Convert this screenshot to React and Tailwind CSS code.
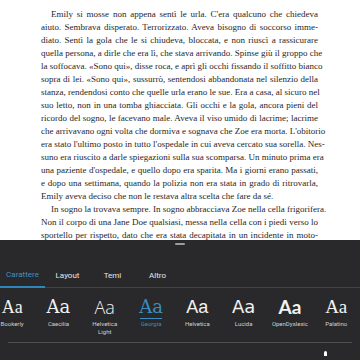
import React from "react";

const lines = [
  { t: "Emily si mosse non appena sentì le urla. C'era qualcuno che chiedeva", indent: true },
  { t: "aiuto. Sembrava disperato. Terrorizzato. Aveva bisogno di soccorso imme-" },
  { t: "diato. Sentì la gola che le si chiudeva, bloccata, e non riuscì a rassicurare" },
  { t: "quella persona, a dirle che era lì, che stava arrivando. Spinse giù il groppo che" },
  { t: "la soffocava. «Sono qui», disse roca, e aprì gli occhi fissando il soffitto bianco" },
  { t: "sopra di lei. «Sono qui», sussurrò, sentendosi abbandonata nel silenzio della" },
  { t: "stanza, rendendosi conto che quelle urla erano le sue. Era a casa, al sicuro nel" },
  { t: "suo letto, non in una tomba ghiacciata. Gli occhi e la gola, ancora pieni del" },
  { t: "ricordo del sogno, le facevano male. Aveva il viso umido di lacrime; lacrime" },
  { t: "che arrivavano ogni volta che dormiva e sognava che Zoe era morta. L'obitorio" },
  { t: "era stato l'ultimo posto in tutto l'ospedale in cui aveva cercato sua sorella. Nes-" },
  { t: "suno era riuscito a darle spiegazioni sulla sua scomparsa. Un minuto prima era" },
  { t: "una paziente d'ospedale, e quello dopo era sparita. Ma i giorni erano passati," },
  { t: "e dopo una settimana, quando la polizia non era stata in grado di ritrovarla," },
  { t: "Emily aveva deciso che non le restava altra scelta che fare da sé.", last: true },
  { t: "In sogno la trovava sempre. In sogno abbracciava Zoe nella cella frigorifera.", indent: true },
  { t: "Non il corpo di una Jane Doe qualsiasi, messa nella cella con i piedi verso lo" },
  { t: "sportello per rispetto, dato che era stata decapitata in un incidente in moto-" },
];

const tabs = ["Carattere", "Layout", "Temi", "Altro"];

const fonts = [
  { name: "Bookerly", cls: "font-['Liberation_Serif',serif]" },
  { name: "Caecilia", cls: "font-['DejaVu_Serif',serif] text-[17px]" },
  { name: "Helvetica\nLight", cls: "font-['Open_Sans',sans-serif] font-light" },
  { name: "Georgia", cls: "font-['DejaVu_Serif',serif] text-[17px]", active: true },
  { name: "Helvetica", cls: "font-['Liberation_Sans',sans-serif]" },
  { name: "Lucida", cls: "font-['DejaVu_Sans',sans-serif] text-[17px]" },
  { name: "OpenDyslexic", cls: "font-['Lato',sans-serif] font-bold text-[19px]" },
  { name: "Palatino", cls: "font-['Liberation_Serif',serif] text-[19px]" },
];

export default function App() {
  return (
    <div className="w-[360px] h-[360px] overflow-hidden bg-white flex flex-col">
      {/* page text */}
      <div className="h-[240px] shrink-0 overflow-hidden pt-[8px] pl-[41px] pr-[42px] font-['Liberation_Serif',serif] text-[9px] text-[#1f1f1f]">
        {lines.map((l, i) => (
          <div
            key={i}
            className={`h-[13px] leading-[13px] whitespace-nowrap ${
              l.indent ? "pl-[10px]" : ""
            } ${l.last ? "text-left" : "text-justify [text-align-last:justify]"}`}
          >
            {l.t}
          </div>
        ))}
      </div>

      {/* settings panel */}
      <div className="flex-1 bg-[#29292b] flex flex-col font-['Roboto',sans-serif]">
        <div className="mt-[3px] mx-auto w-[10px] h-[2px] rounded bg-[#9c9c9e]" />
        <div className="mt-[19px] flex h-[24px] border-b border-[#434345]">
          {tabs.map((t, i) => (
            <div
              key={t}
              className={`w-[45px] flex items-center justify-center text-[8px] ${
                i === 0
                  ? "text-[#3f8fc2] border-b-2 border-[#2f86bd] -mb-px"
                  : "text-[#e6e6e6]"
              }`}
            >
              {t}
            </div>
          ))}
        </div>

        <div className="flex ml-[-11px] mt-[9px] h-[45px]">
          {fonts.map((f) => (
            <div key={f.name} className="w-[46.3px] shrink-0 flex flex-col items-center">
              <div
                className={`text-[18px] leading-[20px] ${f.cls} ${
                  f.active ? "text-[#3b8cc0]" : "text-[#f2f2f2]"
                }`}
              >
                Aa
              </div>
              {f.active && <div className="w-[22px] h-px bg-[#3b8cc0] mt-[1px]" />}
              <div
                className={`text-[6px] leading-[8px] text-center whitespace-pre-line ${
                  f.active ? "text-[#3b8cc0] mt-[1px]" : "text-[#cfcfcf] mt-[3px]"
                }`}
              >
                {f.name}
              </div>
            </div>
          ))}
        </div>

        <div className="mx-[8px] h-px bg-[#505052]" />
        <div className="flex justify-end pr-[33px] mt-[8px]">
          <div className="w-[3px] h-[5px] bg-white rounded-t-full" />
        </div>
      </div>
    </div>
  );
}
